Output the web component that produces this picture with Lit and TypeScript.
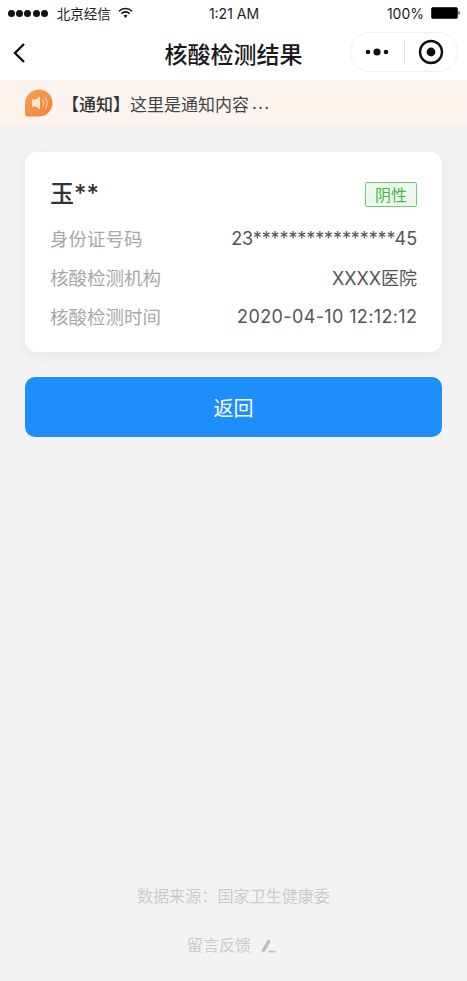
import { LitElement, html, css } from "lit";
import { customElement } from "lit/decorators.js";

@customElement("app-root")
export class AppRoot extends LitElement {
  static styles = css`
    :host {
      display: flex;
      flex-direction: column;
      width: 467px;
      height: 981px;
      overflow: hidden;
      background: #f3f3f3;
      font-family: "Inter", "Noto Sans CJK SC", sans-serif;
      color: #333;
    }
    .status {
      height: 26px;
      flex: none;
      background: #fff;
      display: grid;
      grid-template-columns: 1fr auto 1fr;
      align-items: center;
      padding: 0 7px 0 8px;
      font-size: 14px;
      color: #222;
    }
    .status .left { display: flex; align-items: center; gap: 9px; }
    .dots { display: flex; gap: 1.2px; }
    .dots i { width: 7px; height: 7px; border-radius: 50%; background: #111; display: block; }
    .status .right { display: flex; justify-content: flex-end; align-items: center; gap: 7px; }
    .carrier { display: flex; align-items: center; gap: 7px; font-size: 13.5px; }
    .batt { display: block; }
    .nav {
      height: 54px;
      flex: none;
      background: #fff;
      display: flex;
      align-items: center;
      justify-content: space-between;
      position: relative;
      padding: 0 9px 0 13px;
    }
    .title {
      position: absolute;
      left: 0;
      right: 0;
      text-align: center;
      font-size: 23px;
      font-weight: 500;
      color: #1a1a1a;
      pointer-events: none;
    }
    .capsule {
      width: 108px;
      height: 40px;
      margin-bottom: 2px;
      box-sizing: border-box;
      border: 1px solid #f0f0f0;
      border-radius: 20px;
      display: flex;
      align-items: center;
      background: #fff;
    }
    .capsule > div { flex: 1; display: flex; justify-content: center; align-items: center; }
    .capsule .sep { flex: none; width: 1px; height: 24px; background: #e4e4e4; }
    .notice {
      height: 46px;
      flex: none;
      background: #fdf4f0;
      display: flex;
      align-items: center;
      padding-left: 25px;
      font-size: 17px;
      color: #444;
    }
    .notice b { font-weight: 500; color: #333; margin-left: 9px; }
    .notice svg { display: block; }
    .ellipsis { letter-spacing: 1.2px; margin-left: 3px; }
    .content { padding: 26px 25px 0; display: flex; flex-direction: column; gap: 25px; }
    .card {
      height: 200px;
      box-sizing: border-box;
      background: #fff;
      border-radius: 12px;
      box-shadow: 0 4px 14px rgba(0, 0, 0, 0.05);
      padding: 25px 25px 0 25px;
    }
    .head { display: flex; justify-content: space-between; align-items: center; height: 34px; margin-bottom: 7px; }
    .name { font-size: 24px; font-weight: 500; color: #333; line-height: 34px; }
    .tag {
      width: 52px;
      height: 25px;
      box-sizing: border-box;
      border: 1px solid #6cce6c;
      border-radius: 2px;
      background: #eef9ee;
      color: #44b944;
      font-size: 16px;
      display: flex;
      align-items: center;
      justify-content: center;
    }
    .row {
      display: flex;
      justify-content: space-between;
      align-items: center;
      height: 39px;
      font-size: 18.5px;
    }
    .row .k { color: #a8a8a8; }
    .row .v { color: #555; font-size: 18px; }
    .row .num { padding-top: 2px; }
    .row .date { letter-spacing: 0.37px; margin-right: -0.37px; }
    .row .masked { letter-spacing: -0.1px; }
    .btn {
      height: 60px;
      background: #1e8ffa;
      border-radius: 10px;
      color: #fff;
      font-size: 20px;
      display: flex;
      align-items: center;
      justify-content: center;
    }
    .footer {
      margin-top: auto;
      padding-bottom: 24px;
      display: flex;
      flex-direction: column;
      align-items: center;
      gap: 25px;
      font-size: 16.1px;
      color: #cbcbcb;
    }
    .footer > div { height: 24px; line-height: 24px; display: flex; align-items: center; gap: 10px; }
    .footer .feedback { padding-right: 4px; }
  `;

  render() {
    return html`
      <div class="status">
        <div class="left">
          <div class="dots"><i></i><i></i><i></i><i></i><i></i></div>
          <div class="carrier">北京经信
            <svg width="15" height="12" viewBox="0 0 15 12">
              <path d="M1 4.2a9.2 9.2 0 0 1 13 0" fill="none" stroke="#111" stroke-width="1.6"/>
              <path d="M3.4 6.6a5.8 5.8 0 0 1 8.2 0" fill="none" stroke="#111" stroke-width="1.6"/>
              <path d="M5.6 8.6a2.7 2.7 0 0 1 3.8 0L7.5 11z" fill="#111"/>
            </svg>
          </div>
        </div>
        <div>1:21 AM</div>
        <div class="right">
          <span>100%</span>
          <svg class="batt" width="29" height="12" viewBox="0 0 29 12">
            <rect x="0.5" y="0.5" width="26" height="11" rx="1.5" fill="#000" stroke="#333"/>
            <path d="M27.5 4v4c.8 0 1.2-.8 1.2-2s-.4-2-1.2-2z" fill="#222"/>
          </svg>
        </div>
      </div>
      <div class="nav">
        <svg width="12" height="20" viewBox="0 0 12 20">
          <path d="M11 1 2 10l9 9" fill="none" stroke="#111" stroke-width="2.400"/>
        </svg>
        <div class="title">核酸检测结果</div>
        <div class="capsule">
          <div>
            <svg width="24" height="8" viewBox="0 0 24 8">
              <circle cx="3" cy="4" r="2.300" fill="#111"/>
              <circle cx="12" cy="4" r="3.600" fill="#111"/>
              <circle cx="21" cy="4" r="2.300" fill="#111"/>
            </svg>
          </div>
          <div class="sep"></div>
          <div>
            <svg width="26" height="26" viewBox="0 0 26 26">
              <circle cx="13" cy="13" r="11" fill="none" stroke="#111" stroke-width="2.400"/>
              <circle cx="13" cy="13" r="4.400" fill="#111"/>
            </svg>
          </div>
        </div>
      </div>
      <div class="notice">
        <svg width="28" height="28" viewBox="0 0 28 28">
          <defs>
            <linearGradient id="og" x1="0" y1="0" x2="1" y2="1">
              <stop offset="0" stop-color="#f9a14e"/>
              <stop offset="1" stop-color="#f0823a"/>
            </linearGradient>
          </defs>
          <path d="M14 .5a13.500 13.500 0 0 1 0 27H3a3 3 0 0 1-3-3V14A14 14 0 0 1 14 .5z" fill="url(#og)"/>
          <path d="M7 10.500h3.500L15 7.500v13l-4.500-3H7z" fill="#fde6d2"/>
          <path d="M17.500 10.500a5 5 0 0 1 0 7M20 8.500a8 8 0 0 1 0 11" fill="none" stroke="#fbc99e" stroke-width="1.200"/>
        </svg>
        <b>【通知】</b><span>这里是通知内容</span><span class="ellipsis">...</span>
      </div>
      <div class="content">
        <div class="card">
          <div class="head">
            <div class="name">玉**</div>
            <div class="tag">阴性</div>
          </div>
          <div class="row"><span class="k">身份证号码</span><span class="v num masked">23****************45</span></div>
          <div class="row"><span class="k">核酸检测机构</span><span class="v">XXXX医院</span></div>
          <div class="row"><span class="k">核酸检测时间</span><span class="v num date">2020-04-10 12:12:12</span></div>
        </div>
        <div class="btn">返回</div>
      </div>
      <div class="footer">
        <div>数据来源：国家卫生健康委</div>
        <div class="feedback">留言反馈
          <svg width="15" height="15" viewBox="0 0 16 16">
            <path d="M1 12.500 7.500 1.500l3 1.800L4 14.300l-3 .7z" fill="#bdbdbd"/>
            <path d="M8 14.500h7.500" stroke="#bdbdbd" stroke-width="1.600"/>
          </svg>
        </div>
      </div>
    `;
  }
}
